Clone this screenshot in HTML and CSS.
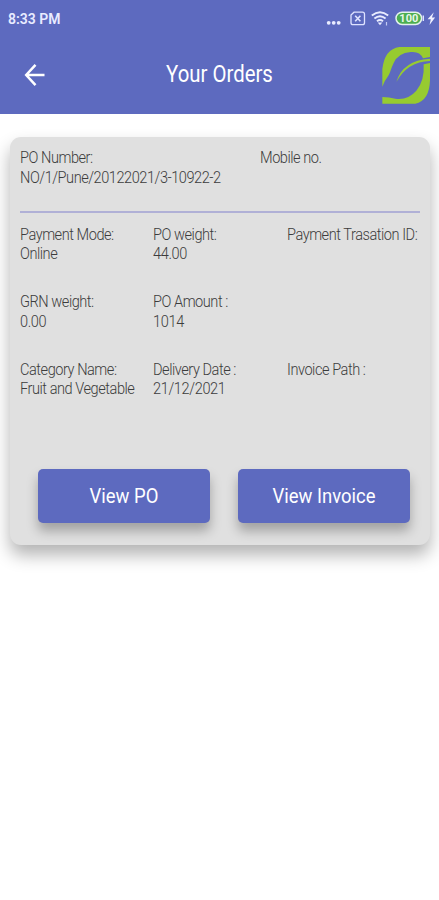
FILE: index.html
```html
<!DOCTYPE html>
<html lang="en">
<head>
    <meta charset="UTF-8">
    <meta name="viewport" content="width=device-width, initial-scale=1.0">
    <title>Your Orders</title>
    <link rel="stylesheet" href="styles.css">
</head>
<body>

<header class="header">
    <div class="status-bar">
        <span class="time">8:33 PM</span>
        <svg class="status-icons" width="110" height="20" viewBox="0 0 110 20">
            <g fill="#e9ecff">
                <circle cx="2.7" cy="13.8" r="1.9"/>
                <circle cx="7.7" cy="13.8" r="1.9"/>
                <circle cx="12.7" cy="13.8" r="1.9"/>
            </g>
            <!-- no sim -->
            <path d="M28 3.2h8.5q2 0 2 2v8.5q0 2-2 2h-9.5q-2 0-2-2V6z" fill="none" stroke="#dfe3ff" stroke-width="1.3"/>
            <path d="M29.2 6.7l5.2 5.6M34.4 6.7l-5.2 5.6" stroke="#dfe3ff" stroke-width="1.6"/>
            <!-- wifi -->
            <g fill="none" stroke="#e9ecff" stroke-width="1.9">
                <path d="M45.8 6.5q8.2-6.6 16.4 0"/>
                <path d="M48.4 9.5q5.6-4.6 11.2 0"/>
                <path d="M51 12.3q3-2.4 6 0"/>
            </g>
            <path d="M51.7 13.4h4.6L54 16.2z" fill="#e9ecff"/>
            <path d="M60.5 13v3.5" stroke="#c3c9f2" stroke-width="1.2"/>
            <!-- battery -->
            <rect x="70" y="3.2" width="25.6" height="12.2" rx="6.1" fill="#4cae50" stroke="#e3f1ec" stroke-width="1.5"/>
            <path d="M97.3 6.5v5.5" stroke="#dfe3ff" stroke-width="1.4"/>
            <text class="battery-text" x="82.8" y="13.3" text-anchor="middle">100</text>
            <path d="M107.8 3.2l-6.2 7h3.2l-1.3 5.8 5.6-7.6h-3.2z" fill="#eef0ff"/>
        </svg>
    </div>
    <div class="toolbar">
        <svg class="back" width="22" height="24" viewBox="0 0 22 24">
            <path d="M20.5 12H2.5M11.5 1.8L2.2 12l9.3 10.2" fill="none" stroke="#fff" stroke-width="2.5"/>
        </svg>
        <h1 class="title">Your Orders</h1>
        <!-- leaf logo -->
        <svg class="logo" width="50" height="58" viewBox="36 29 150 174">
            <g fill="#97cb30">
                <path d="M37 151V98Q44 38 88 32H180V62L159 66Q150 44 122 47Q84 50 71 80C62 98 61 110 54 120Q43 134 37 151z"/>
                <path d="M180 80V132Q178 194 136 202H37V182Q58 182 76 187Q114 192 139 163Q164 134 161 84z"/>
                <path d="M79 137Q98 72 180 67V74Q112 76 79 137z"/>
            </g>
        </svg>
    </div>
</header>

<main class="card">
    <div class="card-top">
        <div class="field"><span class="t">PO Number:</span><span class="t">NO/1/Pune/20122021/3-10922-2</span></div>
        <div class="field"><span class="t">Mobile no.</span></div>
    </div>
    <div class="details">
        <div class="field"><span class="t">Payment Mode:</span><span class="t">Online</span></div>
        <div class="field"><span class="t">PO weight:</span><span class="t num">44.00</span></div>
        <div class="field"><span class="t">Payment Trasation ID:</span></div>
        <div class="field"><span class="t">GRN weight:</span><span class="t num">0.00</span></div>
        <div class="field"><span class="t">PO Amount :</span><span class="t num">1014</span></div>
        <div class="field"></div>
        <div class="field"><span class="t">Category Name:</span><span class="t">Fruit and Vegetable</span></div>
        <div class="field"><span class="t">Delivery Date :</span><span class="t num">21/12/2021</span></div>
        <div class="field"><span class="t">Invoice Path :</span></div>
    </div>
    <div class="actions">
        <button class="btn"><span>View PO</span></button>
        <button class="btn"><span>View Invoice</span></button>
    </div>
</main>

</body>
</html>
```

FILE: styles.css
```css
body {
    margin: 0;
    min-height: 900px;
    background-color: #fff;
    font-family: Roboto, "Liberation Sans", sans-serif;
    color: #3c3c3c;
}

.header {
    height: 114px;
    background-color: #5d6abf;
    color: #fff;
}

.status-bar {
    display: flex;
    justify-content: space-between;
    height: 38px;
    padding: 9px 3px 0 8px;
    box-sizing: border-box;
}

.time {
    font-size: 15.5px;
    font-weight: 600;
    line-height: 20px;
    color: #e9ecff;
    transform: scaleX(0.9);
    transform-origin: left;
}

.battery-text {
    font-size: 11px;
    font-weight: 700;
    fill: #e8f7e8;
}

.toolbar {
    display: grid;
    grid-template-columns: 60px 1fr 60px;
    align-items: center;
    height: 74px;
}

.back {
    margin-left: 24px;
}

.title {
    margin: 0;
    font-size: 23px;
    font-weight: 400;
    line-height: 28px;
    text-align: center;
    transform: scaleX(0.885);
}

.logo {
    margin-left: 3px;
}

.card {
    height: 408px;
    margin: 23px 9px 0 10px;
    padding: 11px 10px 0;
    box-sizing: border-box;
    border-radius: 11px;
    background-color: #e0e0e0;
    box-shadow: 0 10px 17px rgba(0, 0, 0, 0.3);
}

.card-top {
    display: grid;
    grid-template-columns: 60% 40%;
    height: 63px;
    border-bottom: 2px solid #b0b0d6;
}

.details {
    display: grid;
    grid-template-columns: repeat(3, minmax(0, 1fr));
    grid-auto-rows: 67.5px;
    padding-top: 11.5px;
}

.t {
    display: block;
    width: max-content;
    font-size: 16px;
    font-weight: 300;
    line-height: 19.5px;
    letter-spacing: -0.5px;
    white-space: nowrap;
    transform: scaleX(0.91);
    transform-origin: left;
}

.num {
    letter-spacing: -0.4px;
}

.actions {
    display: flex;
    gap: 28px;
    padding: 42px 10px 0 18px;
}

.btn {
    flex: 1;
    height: 54px;
    padding: 0;
    border: none;
    border-radius: 5px;
    background-color: #5d6abf;
    box-shadow: 0 8px 12px rgba(0, 0, 0, 0.28);
    color: #fff;
    font-family: inherit;
    font-size: 21px;
}

.btn span {
    display: block;
    transform: scaleX(0.88);
}
```
